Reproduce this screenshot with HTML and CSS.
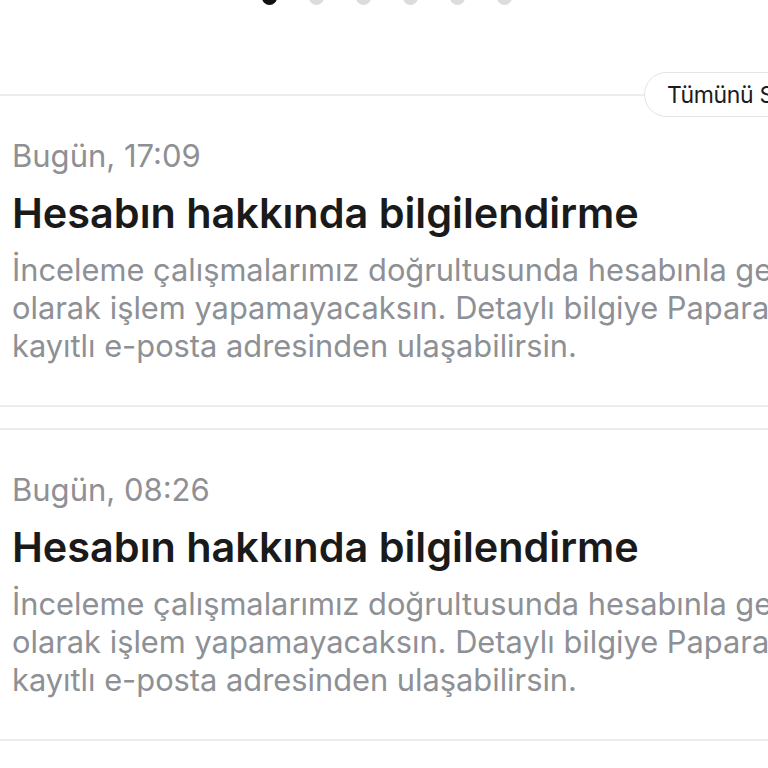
FILE: index.html
```html
<!DOCTYPE html>
<html lang="tr">
<head>
<meta charset="utf-8">
<link rel="stylesheet" href="styles.css">
</head>
<body>
<div class="page">
  <div class="dots">
    <span class="dot active"></span>
    <span class="dot"></span>
    <span class="dot"></span>
    <span class="dot"></span>
    <span class="dot"></span>
    <span class="dot"></span>
  </div>
  <div class="list">
    <button class="clear-all">Tümünü Sil</button>
    <article class="card">
      <div class="date">Bugün, 17:09</div>
      <h2 class="title">Hesabın hakkında bilgilendirme</h2>
      <p class="body">İnceleme çalışmalarımız doğrultusunda hesabınla geçici<br>olarak işlem yapamayacaksın. Detaylı bilgiye Papara'da<br>kayıtlı e-posta adresinden ulaşabilirsin.</p>
    </article>
    <article class="card">
      <div class="date">Bugün, 08:26</div>
      <h2 class="title">Hesabın hakkında bilgilendirme</h2>
      <p class="body">İnceleme çalışmalarımız doğrultusunda hesabınla geçici<br>olarak işlem yapamayacaksın. Detaylı bilgiye Papara'da<br>kayıtlı e-posta adresinden ulaşabilirsin.</p>
    </article>
  </div>
</div>
</body>
</html>
```
FILE: styles.css
```css
* { box-sizing: border-box; }
html, body { margin: 0; padding: 0; background: #fff; overflow: hidden; }
body { font-family: Inter, "Noto Sans", sans-serif; width: 768px; height: 768px; }
.page { width: 768px; position: relative; }
.dots {
  display: flex;
  gap: 32px;
  padding-left: 262px;
  margin-top: -10px;
  height: 14px;
}
.dot { width: 15px; height: 15px; border-radius: 50%; background: #dcdcdc; flex: none; }
.dot.active { background: #111; }
.list { position: relative; margin-top: 90px; display: flex; flex-direction: column; gap: 21px; }
.clear-all {
  position: absolute;
  top: -22px;
  left: 644px;
  height: 45px;
  width: 200px;
  border: 1px solid #e4e4e4;
  border-radius: 23px;
  background: #fff;
  font-family: inherit;
  font-size: 23px;
  color: #1c1c1c;
  text-align: left;
  padding: 0 0 0 22px;
  letter-spacing: -0.3px;
}
.card {
  width: 768px;
  border-top: 2px solid #ececec;
  border-bottom: 2px solid #ececec;
  padding: 40px 0 0 12px;
  height: 313px;
  overflow: hidden;
}
.date { font-size: 31px; color: #8e9094; line-height: 40px; letter-spacing: 0; white-space: nowrap; }
.title { margin: 15px 0 0; font-size: 41.4px; font-weight: 600; color: #1a1a1a; line-height: 44px; letter-spacing: 0; white-space: nowrap; }
.body { margin: 16px 0 0; font-size: 30.8px; color: #8d9095; line-height: 38px; letter-spacing: 0; white-space: nowrap; }
```
